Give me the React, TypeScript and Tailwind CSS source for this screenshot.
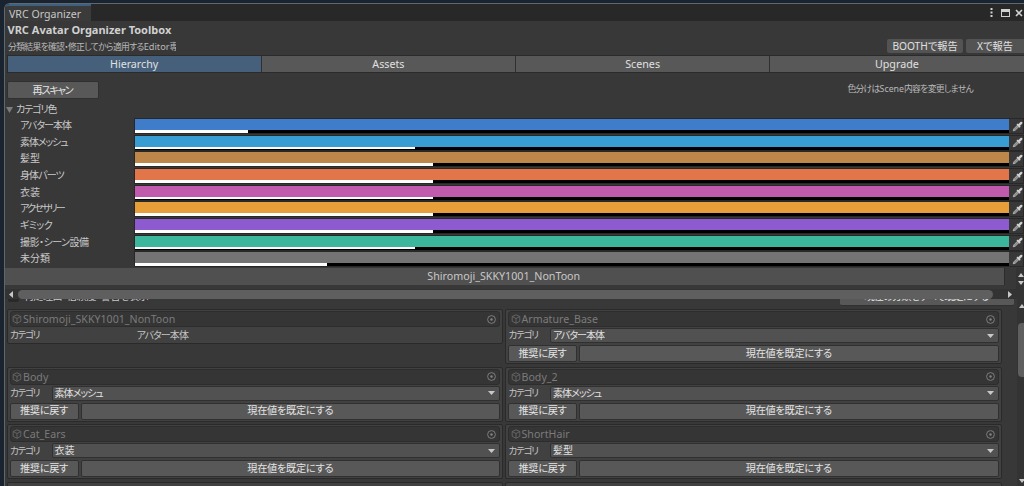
import React from 'react';

interface Category {
  name: string;
  color: string;
  alpha: number;
  tracking: string;
}

interface Item {
  name: string;
  category: string;
  locked?: boolean;
}

const tabs = ['Hierarchy', 'Assets', 'Scenes', 'Upgrade'];

const categories: Category[] = [
  { name: 'アバター本体', color: '#3f7cc9', alpha: 112.5, tracking: 'tracking-[-1px]' },
  { name: '素体メッシュ', color: '#389dd3', alpha: 279.5, tracking: 'tracking-[-1.1px]' },
  { name: '髪型', color: '#be874a', alpha: 297.5, tracking: 'tracking-normal' },
  { name: '身体パーツ', color: '#e27549', alpha: 297.5, tracking: 'tracking-[-0.9px]' },
  { name: '衣装', color: '#c05aad', alpha: 297.5, tracking: 'tracking-normal' },
  { name: 'アクセサリー', color: '#e79f39', alpha: 297.5, tracking: 'tracking-[-1.8px]' },
  { name: 'ギミック', color: '#8d5ad0', alpha: 297.5, tracking: 'tracking-[-0.6px]' },
  { name: '撮影・シーン設備', color: '#3db69e', alpha: 279.5, tracking: 'tracking-[-0.5px]' },
  { name: '未分類', color: '#747474', alpha: 191.5, tracking: 'tracking-normal' },
];

const items: Item[] = [
  { name: 'Shiromoji_SKKY1001_NonToon', category: 'アバター本体', locked: true },
  { name: 'Armature_Base', category: 'アバター本体' },
  { name: 'Body', category: '素体メッシュ' },
  { name: 'Body_2', category: '素体メッシュ' },
  { name: 'Cat_Ears', category: '衣装' },
  { name: 'ShortHair', category: '髪型' },
];

function Eyedropper() {
  return (
    <svg className="h-[11px] w-[11px] shrink-0" viewBox="0 0 11 11">
      <path d="M1.2 9.8 2 7.7 5.8 3.9 7.2 5.3 3.4 9.1Z" fill="#8a8a8a" stroke="#c4c4c4" strokeWidth="0.8" />
      <path d="M5 3 8.2 6.2" stroke="#d0d0d0" strokeWidth="1.5" />
      <path d="M7 4.2 9.3 1.9" stroke="#d0d0d0" strokeWidth="2.4" strokeLinecap="round" />
    </svg>
  );
}

function Cube() {
  return (
    <svg className="h-[10px] w-[10px] shrink-0" viewBox="0 0 10 10" fill="none" stroke="#686868" strokeWidth="0.9">
      <path d="M5 .8 8.8 2.5V7.3L5 9.3 1.2 7.3V2.5ZM1.2 2.5 5 4.5 8.8 2.5M5 4.5V9.3" />
    </svg>
  );
}

function Triangle({ className, d, fill = '#c8c8c8' }: { className: string; d: string; fill?: string }) {
  return (
    <svg className={className} viewBox="0 0 8 8" preserveAspectRatio="none">
      <path d={d} fill={fill} />
    </svg>
  );
}

function ItemCard({ item }: { item: Item }) {
  return (
    <div
      className={`rounded-[2px] border border-[#2a2a2a] bg-[#414141] px-[2px] pt-px ${item.locked ? 'h-[35px]' : 'h-[55px]'}`}
    >
      <div className="flex h-[16px] items-center rounded-[3px] border border-[#2d2d2d] bg-[#353535] pl-[1.5px] pr-[3px]">
        <Cube />
        <span className="ml-px flex-1 text-[10.6px] leading-[14px] tracking-[0.03px] text-[#7b7b7b]">{item.name}</span>
        <svg className="h-[9px] w-[9px]" viewBox="0 0 9 9">
          <circle cx="4.5" cy="4.5" r="3.9" fill="none" stroke="#848484" strokeWidth="0.9" />
          <circle cx="4.5" cy="4.5" r="1.2" fill="#848484" />
        </svg>
      </div>
      <div className="mt-px flex h-[15px] items-center">
        <span className={`pl-[0.5px] text-[9.5px] tracking-[-1.2px] text-[#c4c4c4] ${item.locked ? 'w-[127px]' : 'w-[42px]'}`}>カテゴリ</span>
        {item.locked ? (
          <span className="text-[10px] tracking-[-0.9px] text-[#c4c4c4]">{item.category}</span>
        ) : (
          <div className="flex h-[15px] flex-1 items-center justify-between rounded-[2px] border border-[#303030] bg-[#515151] pl-[2px] pr-[4px]">
            <span className={`text-[10px] leading-[13px] text-[#e0e0e0] ${item.category.length > 2 ? 'tracking-[-1px]' : 'tracking-normal'}`}>
              {item.category}
            </span>
            <Triangle className="h-[4px] w-[7px]" d="M0 0H8L4 8Z" />
          </div>
        )}
      </div>
      {!item.locked && (
        <div className="mt-[2px] flex h-[17px] gap-[2px] text-[10.2px] tracking-[-0.3px] text-[#e4e4e4]">
          <button className="flex w-[69px] items-center justify-center rounded-[2px] border border-[#303030] bg-[#585858]">推奨に戻す</button>
          <button className="flex flex-1 items-center justify-center rounded-[2px] border border-[#303030] bg-[#585858]">現在値を既定にする</button>
        </div>
      )}
    </div>
  );
}

export default function App() {
  return (
    <div className="h-[486px] w-[1024px] overflow-hidden bg-[#1a2430] pl-[3.5px] pt-[3px] font-['Noto_Sans','Noto_Sans_CJK_JP',sans-serif] [font-feature-settings:'palt']">
      <div className="flex h-[483px] flex-col overflow-hidden whitespace-nowrap rounded-tl-[6px] border-l border-t border-[#5e686e] bg-[#383838] text-[#c8c8c8]">
        {/* Window tab bar */}
        <div className="flex h-[17px] shrink-0 justify-between bg-[#282828]">
          <div className="w-[86px] rounded-tl-[4px] border-t-2 border-[#3d5f80] bg-[#3b3b3b] pl-[4.5px] text-[10.6px] leading-[17px]">
            VRC Organizer
          </div>
          <div className="flex items-center gap-[8px] pr-px">
            <svg className="h-[9px] w-[3px]" viewBox="0 0 3 9" fill="#d0d0d0">
              <path d="M.5 0h2v2h-2zM.5 3.5h2v2h-2zM.5 7h2v2h-2z" />
            </svg>
            <div className="flex items-center gap-[5px]">
              <div className="h-[8px] w-[9px] border border-t-[3px] border-[#d0d0d0]" />
              <svg className="h-[8px] w-[8px]" viewBox="0 0 8 8" stroke="#d0d0d0" strokeWidth="1.6">
                <path d="M1 1 7 7M7 1 1 7" />
              </svg>
            </div>
          </div>
        </div>

        {/* Title and report links */}
        <div className="h-[17px] shrink-0 pl-[3px] text-[11px] font-bold leading-[17px] text-[#d0d0d0]">VRC Avatar Organizer Toolbox</div>
        <div className="flex h-[17px] shrink-0 justify-between pl-[3.5px]">
          <div className="w-[168px] overflow-hidden text-[8.8px] leading-[18px] tracking-[-0.67px] text-[#b8b8b8]">
            分類結果を確認・修正してから適用する<span className="text-[9.2px] tracking-normal">Editor</span>専用
          </div>
          <div className="flex gap-[3px] pt-px text-[10.2px] text-[#e0e0e0]">
            <button className="h-[14px] w-[76px] rounded-[2px] bg-[#535353] leading-[13px]">BOOTHで報告</button>
            <button className="h-[14px] w-[58px] rounded-l-[2px] bg-[#535353] leading-[13px]">Xで報告</button>
          </div>
        </div>

        {/* Page tabs */}
        <div className="ml-[2px] flex h-[18px] w-[1018px] shrink-0 border border-r-0 border-[#2b2b2b] text-[10.7px]">
          {tabs.map((tab, i) => (
            <button
              key={tab}
              className={`flex flex-1 items-center justify-center border-r border-[#303030] text-[#e0e0e0] ${i === 0 ? 'bg-[#46607c]' : 'bg-[#585858]'}`}
            >
              {tab}
            </button>
          ))}
        </div>

        <div className="flex h-[28px] shrink-0 items-start justify-between pl-[2px] pr-[51px] pt-[8px]">
          <button className="h-[18px] w-[92px] rounded-[2px] border border-[#303030] bg-[#585858] text-[10.2px] leading-[16px] tracking-[-1.3px] text-[#e4e4e4]">
            再スキャン
          </button>
          <span className="text-[8.8px] leading-[17px] tracking-[-0.7px] text-[#b8b8b8]">
            色分けは<span className="tracking-normal">Scene</span>内容を変更しません
          </span>
        </div>

        {/* Category colors */}
        <div className="flex h-[17px] shrink-0 items-center gap-[3px] pl-[1.5px]">
          <Triangle className="h-[6px] w-[7px]" d="M0 0H8L4 8Z" fill="#7c7c7c" />
          <span className="text-[10px] leading-[15px] tracking-[-1.1px]">カテゴリ色</span>
        </div>
        <div className="flex h-[150px] shrink-0 flex-col">
          {categories.map((category) => (
            <div key={category.name} className="flex min-h-0 flex-1 items-start">
              <span className={`w-[129.5px] shrink-0 pl-[15.5px] text-[10px] leading-[15px] ${category.tracking}`}>{category.name}</span>
              <div className="h-[16px] w-[890px] shrink-0 border border-[#282828] pr-[14px]">
                <div className="relative h-full w-[874px]">
                  <div className="h-[11px]" style={{ backgroundColor: category.color }} />
                  <div className="h-[3px] bg-black">
                    <div className="h-[2.5px] bg-white" style={{ width: category.alpha }} />
                  </div>
                  <div className="absolute -right-[14px] top-[1.5px]">
                    <Eyedropper />
                  </div>
                </div>
              </div>
            </div>
          ))}
        </div>

        {/* Selected avatar */}
        <div className="flex h-[21px] shrink-0">
          <div className="h-[17px] w-[1001px] border-r border-[#2c2c2c] bg-[#505050] pr-px text-center text-[10.7px] leading-[17px]">
            Shiromoji_SKKY1001_NonToon
          </div>
          <div className="ml-[11px] flex flex-1 flex-col gap-[4px] bg-[#333333] pl-[2px] pt-[5px]">
            <Triangle className="h-[4px] w-[6px]" d="M0 8H8L4 0Z" />
            <Triangle className="h-[4px] w-[6px]" d="M0 0H8L4 8Z" />
          </div>
        </div>
        <div className="flex h-[10px] shrink-0 items-center bg-[#333333] pl-[4.5px]">
          <Triangle className="h-[7px] w-[4px]" d="M8 0V8L0 4Z" />
          <div className="ml-[5px] h-[9px] w-[975px] rounded-full bg-[#5f5f5f]" />
          <Triangle className="ml-[15px] h-[7px] w-[4px]" d="M0 0V8L8 4Z" />
        </div>

        {/* Object list */}
        <div className="flex min-h-0 flex-1 justify-between">
          <div className="w-[1009px]">
            <div className="flex h-[10px] justify-between pl-[3px]">
              <div className="flex h-[3px] overflow-hidden">
                <div className="h-[3px] w-[11px] rounded-b-[2px] bg-[#292929]" />
                <span className="-mt-[10px] ml-[5px] text-[10px] leading-[14px] tracking-[-0.3px]">判定理由・信頼度・警告を表示</span>
              </div>
              <div className="h-[7px] w-[174px] overflow-hidden rounded-b-[2px] border-b border-[#303030] bg-[#585858] text-center text-[10.2px] tracking-[-0.9px] text-[#e4e4e4]">
                <div className="-mt-[10px] leading-[14px]">現在の分類をすべて既定にする</div>
              </div>
            </div>
            <div className="grid w-[997px] grid-cols-2 items-start gap-x-[2px] gap-y-[2.6px] pl-[2px]">
              {items.map((item) => (
                <ItemCard key={item.name} item={item} />
              ))}
              <div className="h-[55px] rounded-[2px] border border-[#2a2a2a] bg-[#414141]" />
              <div className="h-[55px] rounded-[2px] border border-[#2a2a2a] bg-[#414141]" />
            </div>
          </div>
          <div className="flex w-[7px] flex-col bg-[#333333] pl-px pt-[5px]">
            <Triangle className="ml-px h-[4px] w-[6px]" d="M0 8H8L4 0Z" />
            <div className="mt-[15px] h-[54px] rounded-l-[4px] bg-[#5f5f5f]" />
            <Triangle className="ml-px mt-[102px] h-[4px] w-[6px]" d="M0 0H8L4 8Z" />
          </div>
        </div>
      </div>
    </div>
  );
}
